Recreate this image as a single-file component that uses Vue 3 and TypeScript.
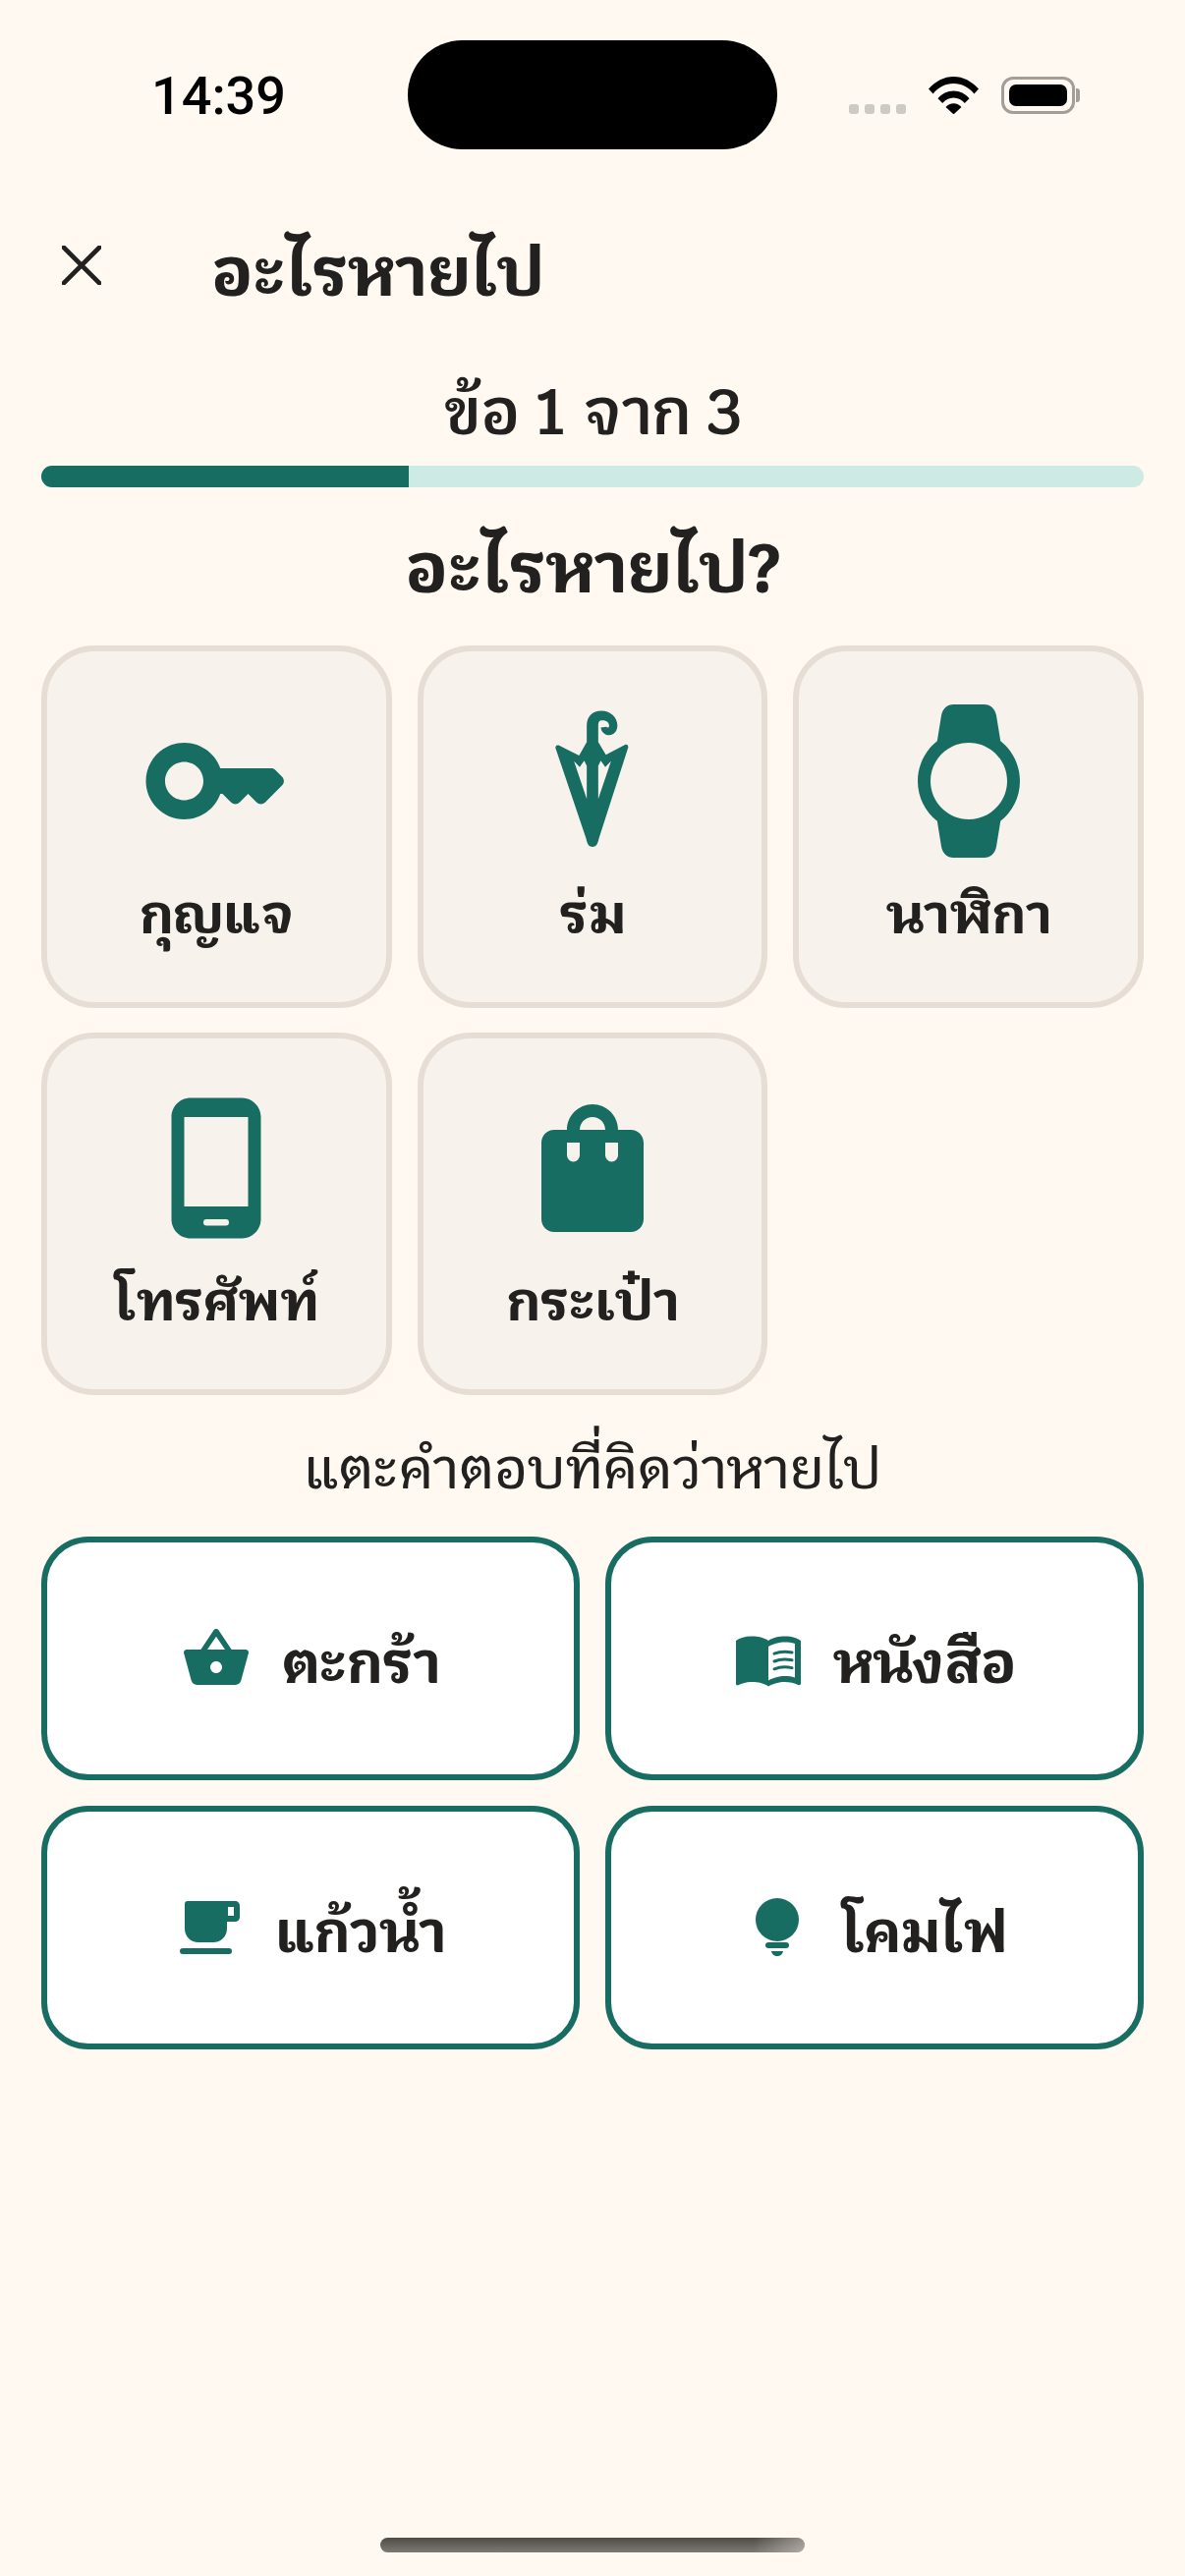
<script setup lang="ts">
interface Item {
  label: string
  icon: string
}

const choices: Item[] = [
  { label: 'กุญแจ', icon: 'key' },
  { label: 'ร่ม', icon: 'umbrella' },
  { label: 'นาฬิกา', icon: 'watch' },
  { label: 'โทรศัพท์', icon: 'phone' },
  { label: 'กระเป๋า', icon: 'bag' },
]

const answers: Item[] = [
  { label: 'ตะกร้า', icon: 'basket' },
  { label: 'หนังสือ', icon: 'book' },
  { label: 'แก้วน้ำ', icon: 'cup' },
  { label: 'โคมไฟ', icon: 'lamp' },
]
</script>

<template>
  <div class="screen">
    <div class="status">
      <span class="time">14:39</span>
      <div class="island"></div>
      <div class="status-right">
        <div class="dots"><i></i><i></i><i></i><i></i></div>
        <svg class="wifi" viewBox="0 0 51 38">
          <path d="M0 12.500C7 4.800 15.800 0 25.500 0S44 4.800 51 12.500l-4.600 4.900C41 11 33.700 7 25.500 7S10 11 4.600 17.400z" />
          <path d="M9.500 22.300C13.500 17.500 19.200 14.500 25.500 14.500s12 3 16 7.800L36.800 27c-2.800-3.300-6.800-5.400-11.300-5.400S17 23.700 14.200 27z" />
          <path d="M17.500 31C19.500 28.700 22.300 27.200 25.500 27.200s6 1.500 8 3.800l-8 7.400z" />
        </svg>
        <div class="battery"><div class="battery-fill"></div></div>
      </div>
    </div>

    <header class="topbar">
      <svg class="close" viewBox="0 0 42 42">
        <path d="M2 2l38 38M40 2L2 40" />
      </svg>
      <h1>อะไรหายไป</h1>
    </header>

    <div class="step">ข้อ 1 จาก 3</div>
    <div class="track"><div class="fill"></div></div>

    <h2>อะไรหายไป?</h2>

    <div class="choices">
      <div v-for="c in choices" :key="c.label" class="choice">
        <svg class="choice-icon" viewBox="0 0 24 24">
          <path v-if="c.icon === 'key'" fill-rule="evenodd" d="M20.600 10h-7.950C11.830 7.670 9.610 6 7 6c-3.310 0-6 2.690-6 6s2.690 6 6 6c2.610 0 4.830-1.670 5.650-4H13l1.300 1.300c.4.4 1 .4 1.400 0L17 14l1.300 1.300c.4.4 1 .4 1.400 0l2.600-2.600c.4-.4.4-1 0-1.400l-1-1c-.2-.2-.4-.3-.7-.3zM7 15c-1.650 0-3-1.350-3-3s1.350-3 3-3 3 1.350 3 3-1.350 3-3 3z" />
          <path v-else-if="c.icon === 'umbrella'" fill-rule="evenodd" d="M11.100 5.900V3.300C11.100 1.900 12 1 13.400 1c1.500 0 2.500 1.100 2.500 2.300 0 .9-.6 1.500-1.300 1.500-.7 0-1.200-.5-1.300-1.200l.9-.1c.1.2.4.2.4-.2 0-.5-.5-.9-1.200-.8-.3 0-.5.3-.5.7v2.700l1.200 2 3-1.600c.3-.1.5.1.5.4L13 21c-.2 1-.5 1.300-1 1.300s-.8-.3-1-1.300L6.200 6.800c0-.3.2-.5.5-.4l3.200 1.600z M9.100 8.900l2 5.900V9.600l-.4-.8-.7 1zM12.900 9.600v5.200l2-5.900-.9.9-.7-1z" />
          <path v-else-if="c.icon === 'watch'" fill-rule="evenodd" d="M20 12c0-2.540-1.190-4.810-3.040-6.270L16.300 1.700C16.100.7 15.400 0 14.400 0H9.600C8.600 0 7.900.7 7.700 1.700l-.65 4.030C5.190 7.190 4 9.450 4 12s1.190 4.810 3.050 6.270l.65 4.030c.2 1 .9 1.700 1.900 1.700h4.800c1 0 1.700-.7 1.900-1.700l.66-4.030C18.810 16.810 20 14.540 20 12zM6 12c0-3.310 2.690-6 6-6s6 2.690 6 6-2.690 6-6 6-6-2.690-6-6z" />
          <path v-else-if="c.icon === 'phone'" fill-rule="evenodd" d="M16 1H8C6.340 1 5 2.340 5 4v16c0 1.660 1.340 3 3 3h8c1.660 0 3-1.340 3-3V4c0-1.660-1.340-3-3-3zm-2.500 20h-3a.5.5 0 0 1 0-1h3a.5.5 0 0 1 0 1zm3.500-3H7V4h10v14z" />
          <path v-else fill-rule="evenodd" d="M18 6h-2c0-2.210-1.790-4-4-4S8 3.790 8 6H6c-1.100 0-2 .9-2 2v12c0 1.100.9 2 2 2h12c1.100 0 2-.9 2-2V8c0-1.100-.9-2-2-2zm-6-2c1.100 0 2 .9 2 2h-4c0-1.100.9-2 2-2zm-2 4v2a1 1 0 0 1-2 0V8zm6 0v2a1 1 0 0 1-2 0V8z" />
        </svg>
        <span class="choice-label">{{ c.label }}</span>
      </div>
    </div>

    <p class="hint">แตะคำตอบที่คิดว่าหายไป</p>

    <div class="answers">
      <div v-for="a in answers" :key="a.label" class="answer">
        <svg v-if="a.icon === 'basket'" class="answer-icon" viewBox="0 0 24 24">
          <path fill-rule="evenodd" d="M22 9h-4.790l-4.380-6.560c-.19-.28-.51-.42-.83-.42s-.64.14-.83.43L6.790 9H2c-.55 0-1 .45-1 1 0 .09.01.18.04.27l2.540 9.270c.23.84 1 1.460 1.920 1.460h13c.92 0 1.690-.62 1.930-1.460l2.540-9.270L23 10c0-.55-.45-1-1-1zM9 9l3-4.400L15 9H9zm3 8c-1.100 0-2-.9-2-2s.9-2 2-2 2 .9 2 2-.9 2-2 2z" />
        </svg>
        <svg v-else-if="a.icon === 'book'" class="answer-icon" viewBox="0 0 24 24">
          <path fill-rule="evenodd" d="M21 5c-1.110-.35-2.330-.5-3.500-.5-1.950 0-4.050.4-5.500 1.500-1.450-1.100-3.550-1.500-5.500-1.500S2.450 4.900 1 6v14.650c0 .25.25.5.5.5.1 0 .15-.05.25-.05C3.100 20.450 5.050 20 6.500 20c1.950 0 4.050.4 5.500 1.500 1.350-.85 3.800-1.500 5.500-1.500 1.650 0 3.350.3 4.750 1.050.1.05.15.05.25.05.25 0 .5-.25.5-.5V6c-.6-.45-1.250-.75-2-1zm0 13.500c-1.100-.35-2.300-.5-3.500-.5-1.700 0-4.150.65-5.500 1.500V8c1.350-.85 3.800-1.500 5.500-1.500 1.200 0 2.400.15 3.500.5v11.500z" />
          <path class="book-line" d="M14 10.400c2-.8 4-.8 6-.4M14 13c2-.8 4-.8 6-.4M14 15.600c2-.8 4-.8 6-.4" />
        </svg>
        <svg v-else-if="a.icon === 'cup'" class="answer-icon" viewBox="0 0 72 72">
          <path fill-rule="evenodd" d="M12 9h48c3 0 5 2 5 5v11c0 3-2 5-5 5h-8v7c0 8-6 14-14 14H23c-8 0-14-6-14-14V12c0-2 1-3 3-3zm41 6v9h6v-9z" />
          <rect x="4" y="57" width="53" height="6" rx="3" />
        </svg>
        <svg v-else class="answer-icon" viewBox="0 0 72 72">
          <circle cx="36" cy="28" r="22" />
          <rect x="24" y="51" width="24" height="6" rx="3" />
          <path d="M30 60h12c-.5 3-3 5-6 5s-5.500-2-6-5z" />
        </svg>
        <span class="answer-label">{{ a.label }}</span>
      </div>
    </div>

    <div class="home"></div>
  </div>
</template>

<style>
html,
body {
  margin: 0;
  background: #fff9f2;
}
</style>

<style scoped>
.screen {
  position: relative;
  box-sizing: border-box;
  width: 1206px;
  height: 2622px;
  padding: 0 42px;
  background: #fff9f2;
  color: #22211f;
  font-family: "Krub", "Sarabun", sans-serif;
  overflow: hidden;
}

.status {
  display: flex;
  justify-content: space-between;
  align-items: flex-start;
  height: 200px;
}

.time {
  margin: 67px 0 0 112px;
  font-family: Roboto, "Liberation Sans", sans-serif;
  font-size: 54px;
  line-height: 61px;
  font-weight: 500;
  color: #000;
}

.island {
  position: absolute;
  left: 415px;
  top: 41px;
  width: 376px;
  height: 111px;
  border-radius: 56px;
  background: #000;
}

.status-right {
  display: flex;
  align-items: flex-end;
  gap: 23px;
  margin: 78px 66px 0 0;
}

.dots {
  display: flex;
  gap: 6px;
}

.dots i {
  display: block;
  width: 10px;
  height: 10px;
  border-radius: 3px;
  background: #cdc9c3;
}

.wifi {
  width: 51px;
  height: 38px;
  fill: #000;
}

.battery {
  position: relative;
  box-sizing: border-box;
  width: 75px;
  height: 38px;
  margin-right: 4px;
  padding: 5px;
  border: 3px solid #a39e97;
  border-radius: 12px;
}

.battery::after {
  content: "";
  position: absolute;
  right: -8px;
  top: 9px;
  width: 4px;
  height: 14px;
  border-radius: 0 3px 3px 0;
  background: #a39e97;
}

.battery-fill {
  height: 100%;
  border-radius: 7px;
  background: #000;
}

.topbar {
  display: flex;
  align-items: center;
  gap: 112px;
  height: 130px;
  padding-left: 21px;
  margin-top: 5px;
}

.close {
  width: 40px;
  height: 40px;
  fill: none;
  stroke: #22211f;
  stroke-width: 5;
  stroke-linecap: round;
}

h1 {
  margin: 0;
  padding-top: 14px;
  font-size: 68px;
  line-height: 96px;
  font-weight: 700;
}

.step {
  margin-top: 44px;
  text-align: center;
  font-size: 65px;
  line-height: 80px;
  font-weight: 600;
}

.track {
  height: 22px;
  margin-top: 15px;
  border-radius: 11px;
  background: #cdeae4;
  overflow: hidden;
}

.fill {
  width: 33.33%;
  height: 100%;
  background: #186d62;
}

h2 {
  margin: 41px 0 0;
  text-align: center;
  font-size: 70px;
  line-height: 84px;
  font-weight: 700;
}

.choices {
  display: grid;
  grid-template-columns: repeat(3, 1fr);
  gap: 25px 26px;
  margin-top: 36px;
}

.choice {
  box-sizing: border-box;
  display: flex;
  flex-direction: column;
  align-items: center;
  height: 369px;
  padding-top: 54px;
  border: 6px solid #e6ded4;
  border-radius: 54px;
  background: #f7f3ec;
}

.choice-icon {
  width: 156px;
  height: 156px;
  fill: #186d62;
}

.choice-label {
  margin-top: 18px;
  font-size: 55px;
  line-height: 80px;
  font-weight: 700;
}

.hint {
  margin: 37px 0 0;
  text-align: center;
  font-size: 56px;
  line-height: 76px;
  font-weight: 500;
}

.answers {
  display: grid;
  grid-template-columns: repeat(2, 1fr);
  gap: 26px;
  margin-top: 31px;
}

.answer {
  box-sizing: border-box;
  display: flex;
  align-items: center;
  justify-content: center;
  gap: 30px;
  height: 248px;
  border: 6px solid #186d62;
  border-radius: 48px;
  background: #fff;
}

.answer-icon {
  flex: none;
  width: 72px;
  height: 72px;
  fill: #186d62;
}

.book-line {
  fill: none;
  stroke: #186d62;
  stroke-width: 1;
  stroke-linecap: round;
}

.answer-label {
  padding-top: 10px;
  font-size: 58px;
  line-height: 80px;
  font-weight: 700;
}

.home {
  position: absolute;
  left: 387px;
  top: 2583px;
  width: 432px;
  height: 15px;
  border-radius: 8px;
  background:
    linear-gradient(to right, rgba(255, 249, 242, 0) 88%, rgba(255, 249, 242, 0.4) 100%),
    linear-gradient(#4f4b45, #7d7a73);
}
</style>
